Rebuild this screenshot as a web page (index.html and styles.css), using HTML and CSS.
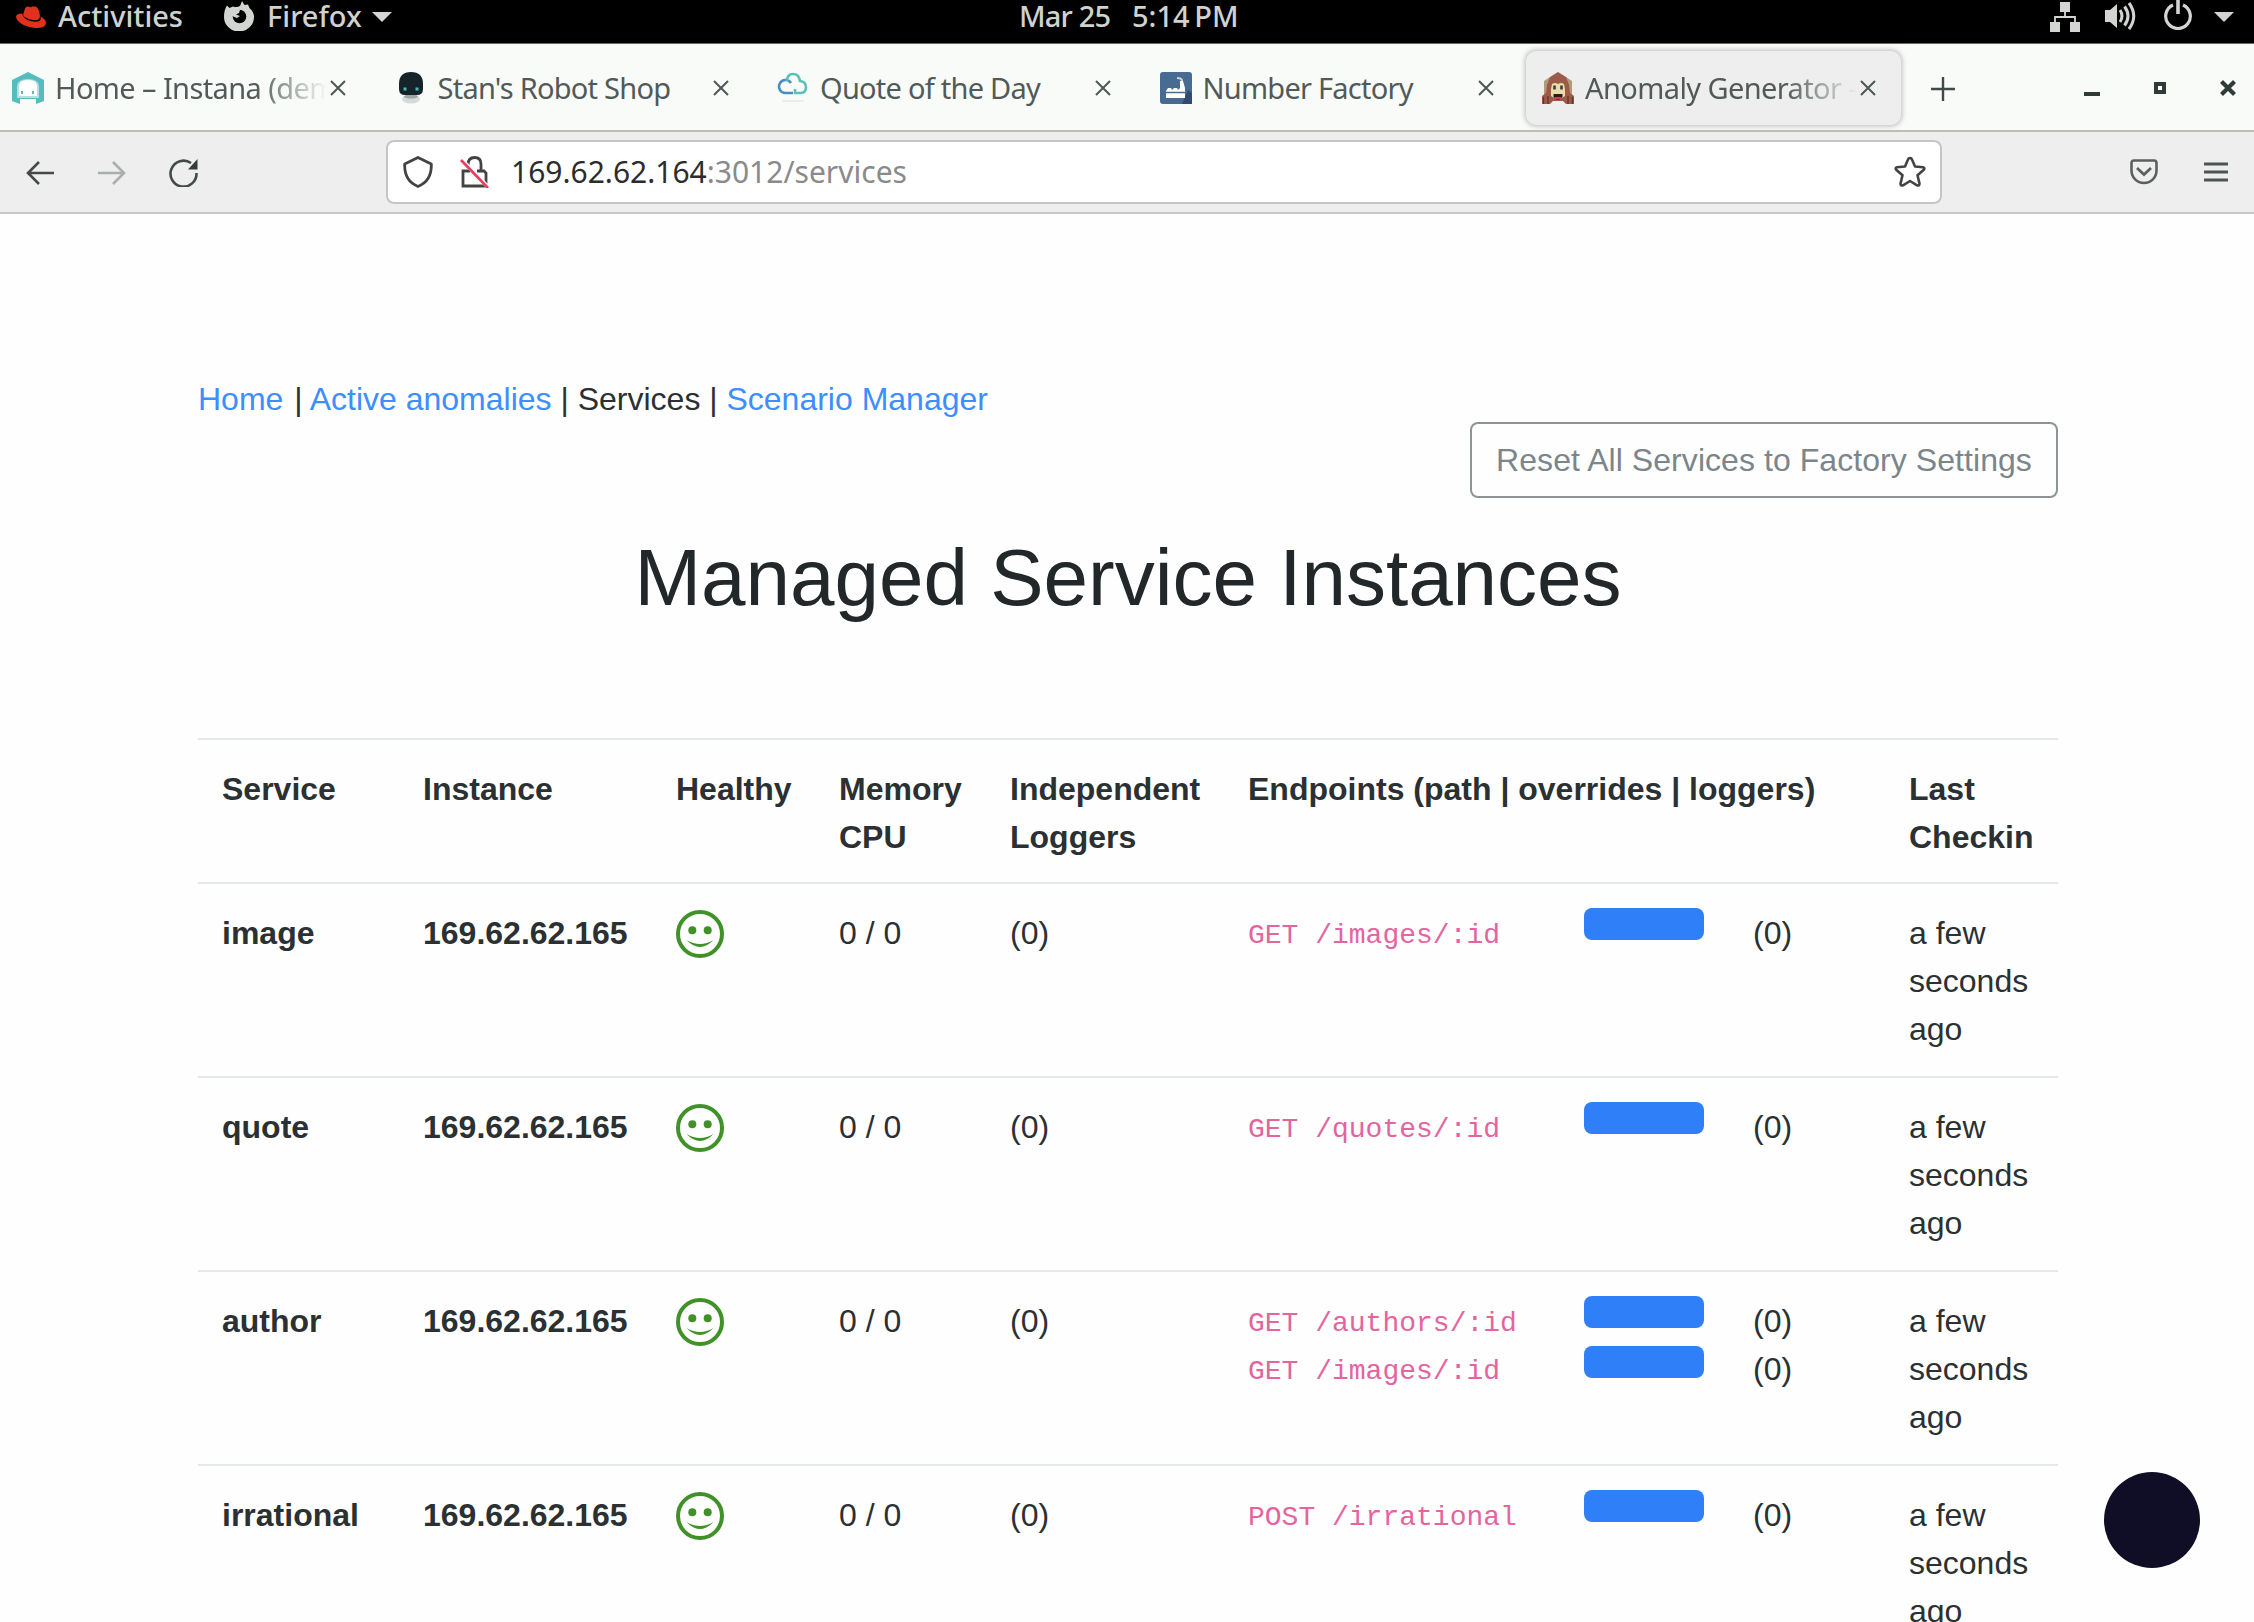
FILE: index.html
```html
<!DOCTYPE html>
<html lang="en">
<head>
<meta charset="utf-8">
<title>Anomaly Generator - Services</title>
<link rel="stylesheet" href="styles.css">
</head>
<body>
<svg class="defs" width="0" height="0">
  <symbol id="close" viewBox="0 0 16 16"><path d="M1 1l14 14M15 1L1 15" fill="none" stroke="currentColor" stroke-width="2"/></symbol>
  <symbol id="smile" viewBox="0 0 48 48"><circle cx="24" cy="24" r="22" fill="none" stroke="#3f9128" stroke-width="4"/><circle cx="16.3" cy="20.3" r="4" fill="#3f9128"/><circle cx="31.700" cy="20.300" r="4" fill="#3f9128"/><path d="M10.500 30q13.500 14 27 0q-13.500 8-27 0z" fill="#3f9128"/></symbol>
</svg>

<header class="topbar">
  <div class="topbar-left">
    <svg class="hat" viewBox="0 0 30 22"><path d="M7 9L9 2.500Q10 0 13 .8L15 1.300Q17-.5 20 .8Q23 2 24 10Q24 15 17 14Q9 12.500 7 9z" fill="#e0301e"/><path d="M6 7.500Q0 7.500 0 11C1 17 12 22.500 22 22Q30 21.500 30 16.500Q29.500 13 24.500 10.500Q26 16 19 15.800Q8 15 6 7.500z" fill="#e0301e"/></svg>
    <span class="sys activities">Activities</span>
    <svg class="fox" viewBox="0 0 30 30"><path d="M3 4.500L5.500 7 9 5.500 12 6.500 16 5 18 0 20.500 4 24 3.500 25.500 7Q30 11 30 16A15 14.500 0 0 1 0 16Q0 9 3 4.500z" fill="#d3d5d2"/><circle cx="15.500" cy="15.500" r="6.800" fill="#000"/><path d="M6 8l7-2 3 3-1 3-3 1.500 4 1.500-3 2-5-2z" fill="#d3d5d2"/></svg>
    <span class="sys firefox">Firefox</span>
    <svg class="tri" viewBox="0 0 20 10"><path d="M0 0h20L10 10z" fill="#d3d5d2"/></svg>
  </div>
  <div class="clock"><span class="sys date">Mar 25</span><span class="sys time">5:14 PM</span></div>
  <div class="topbar-right">
    <svg class="net" viewBox="0 0 30 30"><path d="M10 0h10v10H10zM0 20h10v10H0zM20 20h10v10H20z" fill="#d3d5d2"/><path d="M15 10v5M5 20v-5h20v5" fill="none" stroke="#d3d5d2" stroke-width="1.800"/></svg>
    <svg class="vol" viewBox="0 0 32 28"><path d="M0 8h5l7-6v24l-7-6H0z" fill="#d3d5d2"/><path d="M15 8q4 6 0 12M19.500 4.500q7 9.500 0 19M24 1q9.500 13 0 26" fill="none" stroke="#d3d5d2" stroke-width="3"/></svg>
    <svg class="power" viewBox="0 0 28 30"><path d="M9 5A12.300 12.300 0 1 0 19 5" fill="none" stroke="#d3d5d2" stroke-width="3.200"/><path d="M14 0v14" stroke="#d3d5d2" stroke-width="3.600"/></svg>
    <svg class="tri" viewBox="0 0 20 10"><path d="M0 0h20L10 10z" fill="#d3d5d2"/></svg>
  </div>
</header>

<div class="tabstrip">
  <div class="tab">
    <svg class="favicon" viewBox="0 0 32 32"><path d="M16 0L32 8v21l-8 3v-5H8v5L0 29V8z" fill="#56bdbe"/><path d="M5 14Q6 7 16 7t11 7v12H5z" fill="#b5e0e0"/><path d="M7 14Q7 8 16 8t9 6v10H7z" fill="#fff"/><path d="M10 19v3M21 19v3" stroke="#56bdbe" stroke-width="2"/></svg>
    <span class="tab-label fade">Home – Instana (dem</span>
    <svg class="tab-close"><use href="#close"/></svg>
  </div>
  <div class="tab">
    <svg class="favicon" viewBox="0 0 32 32"><ellipse cx="16" cy="27" rx="9" ry="4.500" fill="#d4dadb"/><ellipse cx="16" cy="24.500" rx="7" ry="2" fill="#9aa5a8"/><path d="M4 12Q4 0 16 0t12 12v5q0 6-6 6H10q-6 0-6-6z" fill="#15242b"/><path d="M10 15.500v3M22 15.500v3" stroke="#49b9b5" stroke-width="3"/></svg>
    <span class="tab-label">Stan's Robot Shop</span>
    <svg class="tab-close"><use href="#close"/></svg>
  </div>
  <div class="tab">
    <svg class="favicon" viewBox="0 0 32 32"><path d="M16 21H8.500A6.500 6.500 0 1 1 14 11" fill="none" stroke="#4a8cc0" stroke-width="2.600"/><path d="M10 9Q10 2 16 2t7 7q6 .5 6 6.500 0 5.500-6 5.500h-5V17" fill="none" stroke="#5bc1b6" stroke-width="2.600"/><path d="M5 29h22" stroke="#eceeee" stroke-width="2"/></svg>
    <span class="tab-label">Quote of the Day</span>
    <svg class="tab-close"><use href="#close"/></svg>
  </div>
  <div class="tab">
    <svg class="favicon" viewBox="0 0 32 32"><rect width="32" height="32" rx="3" fill="#486b92"/><path d="M22 32l6-14 4 3v11z" fill="#304d70"/><path d="M6 26v-7l2-3h3l1 2 2-2h3l1 2 2-2V9h3l2 7v10z" fill="#fff"/><path d="M22 9q0-3-5-3" fill="none" stroke="#c6d1dd" stroke-width="2"/><path d="M6 20.500h19" stroke="#486b92" stroke-width="1.500"/></svg>
    <span class="tab-label">Number Factory</span>
    <svg class="tab-close"><use href="#close"/></svg>
  </div>
  <div class="tab active">
    <svg class="favicon" viewBox="0 0 32 32"><path d="M2 9l6-4h16l6 4v14H2z" fill="#b09c78"/><path d="M8 5L16 0l8 5 3 8 1 8 4 3v8h-8l-3-3H11l-3 3H0v-8l4-3 1-8z" fill="#9c5a48"/><path d="M10 12q3-2 6 0 3-2 6 0l1 5v7q-7 6-14 0v-7z" fill="#e9dcab"/><path d="M1.500 32v-7M30.500 32v-7M6 32v-8M26 32v-8" stroke="#5d362b" stroke-width="1.200"/><path d="M12.500 13.500v4M19.500 13.500v4" stroke="#403c3c" stroke-width="2.600"/><path d="M11.500 22h9v3l-3 2.500h-3l-3-2.500z" fill="#2a1b21"/><path d="M13 26h6" stroke="#df3654" stroke-width="2"/></svg>
    <span class="tab-label fade">Anomaly Generator -</span>
    <svg class="tab-close"><use href="#close"/></svg>
  </div>
  <svg class="plus" viewBox="0 0 24 24"><path d="M12 0v24M0 12h24" stroke="#3f4a49" stroke-width="2.400"/></svg>
  <svg class="minimize" viewBox="0 0 16 16"><path d="M0 14h16" stroke="#2e3b38" stroke-width="4"/></svg>
  <svg class="maximize" viewBox="0 0 12 12"><rect x="2" y="2" width="8" height="8" fill="#fff" stroke="#2e3b38" stroke-width="4"/></svg>
  <svg class="quit" viewBox="0 0 16 16"><path d="M1.500 1.500l13 13M14.500 1.500l-13 13" stroke="#2e3b38" stroke-width="4.200"/></svg>
</div>

<div class="toolbar">
  <svg class="back" viewBox="0 0 28 24"><path d="M28 12H2M13 1L2 12l11 11" fill="none" stroke="#434b4a" stroke-width="2.600"/></svg>
  <svg class="forward" viewBox="0 0 28 24"><path d="M0 12h26M15 1l11 11-11 11" fill="none" stroke="#a9afae" stroke-width="2.600"/></svg>
  <svg class="reload" viewBox="0 0 30 28"><path d="M27.500 14A13 13 0 1 1 22 4" fill="none" stroke="#434b4a" stroke-width="2.600"/><path d="M28.500 0v10.500H19z" fill="#333e3c"/></svg>
  <div class="urlbar">
    <svg class="shield" viewBox="0 0 30 32"><path d="M15 1.500L28.300 8Q29 25 15 30.500Q1 25 1.700 8z" fill="none" stroke="#434343" stroke-width="2.800" stroke-linejoin="round"/></svg>
    <svg class="lock" viewBox="0 0 30 32"><path d="M8 9q0-7.500 6.500-7.500T21 8v6M10 15H3v15h23V17l-2-2h-7" fill="none" stroke="#434343" stroke-width="2.800"/><path d="M2 4l27 28" stroke="#fff" stroke-width="4"/><path d="M1 4l27 28" stroke="#eb3b5e" stroke-width="2.600"/></svg>
    <span class="url">169.62.62.164<span class="url-rest">:3012/services</span></span>
    <svg class="star" viewBox="0 0 32 32"><path d="M16 2q1.500 0 2 1.500l3 7 8 .8q2.500.6.500 2.700l-6 5.300 2 8.300q0 2.700-2.500 1.700l-7-4.300-7 4.300q-2.500 1-2.500-1.700l2-8.300-6-5.300q-2-2.100.5-2.700l8-.8 3-7Q14.500 2 16 2z" fill="none" stroke="#434343" stroke-width="2.600" stroke-linejoin="round"/></svg>
  </div>
  <svg class="pocket" viewBox="0 0 28 26"><path d="M4 1.500h20q2.500 0 2.500 2.500v7.500a12.500 12.500 0 0 1-25 0V4q0-2.500 2.500-2.500z" fill="none" stroke="#59605f" stroke-width="2.600"/><path d="M7 9l7 6.500L21 9" fill="none" stroke="#59605f" stroke-width="2.800"/></svg>
  <svg class="menu" viewBox="0 0 24 20"><path d="M0 2h24M0 10h24M0 18h24" stroke="#4c5453" stroke-width="2.800"/></svg>
</div>

<main class="container">
  <nav class="crumbs"><a class="home">Home</a> | <a>Active anomalies</a> | Services | <a>Scenario Manager</a></nav>
  <button class="reset">Reset All Services to Factory Settings</button>
  <h1>Managed Service Instances</h1>

  <div class="table">
    <div class="row head">
      <div>Service</div><div>Instance</div><div>Healthy</div><div>Memory CPU</div><div>Independent Loggers</div><div>Endpoints (path | overrides | loggers)</div><div>Last Checkin</div>
    </div>
    <div class="row">
      <div class="strong">image</div><div class="strong">169.62.62.165</div><div><svg class="smile"><use href="#smile"/></svg></div><div>0 / 0</div><div>(0)</div>
      <div class="endpoints"><div class="paths"><code>GET /images/:id</code></div><div class="bars"><i></i></div><div>(0)</div></div>
      <div>a few seconds ago</div>
    </div>
    <div class="row">
      <div class="strong">quote</div><div class="strong">169.62.62.165</div><div><svg class="smile"><use href="#smile"/></svg></div><div>0 / 0</div><div>(0)</div>
      <div class="endpoints"><div class="paths"><code>GET /quotes/:id</code></div><div class="bars"><i></i></div><div>(0)</div></div>
      <div>a few seconds ago</div>
    </div>
    <div class="row">
      <div class="strong">author</div><div class="strong">169.62.62.165</div><div><svg class="smile"><use href="#smile"/></svg></div><div>0 / 0</div><div>(0)</div>
      <div class="endpoints"><div class="paths"><code>GET /authors/:id</code><code>GET /images/:id</code></div><div class="bars"><i></i><i></i></div><div>(0)<br>(0)</div></div>
      <div>a few seconds ago</div>
    </div>
    <div class="row">
      <div class="strong">irrational</div><div class="strong">169.62.62.165</div><div><svg class="smile"><use href="#smile"/></svg></div><div>0 / 0</div><div>(0)</div>
      <div class="endpoints"><div class="paths"><code>POST /irrational</code></div><div class="bars"><i></i></div><div>(0)</div></div>
      <div>a few seconds ago</div>
    </div>
  </div>
</main>
<div class="fab"></div>
</body>
</html>
```
FILE: styles.css
```css
* { box-sizing: border-box; }
html, body { height: 1622px; overflow: hidden; }
body {
  margin: 0;
  background: #fefefe;
  color: #2b3033;
  font: 32px/48px "Liberation Sans", Arial, sans-serif;
}
svg { display: block; flex: none; }
.defs { position: absolute; }

/* Desktop top bar */
.topbar {
  height: 44px;
  background: #000;
  border-bottom: 1px solid #666;
  display: grid;
  grid-template-columns: 1019px 1fr 204px;
  align-items: start;
}
.topbar > div { display: flex; align-items: flex-start; }
.sys {
  font: 500 29px/31px "Noto Sans", sans-serif;
  color: #d0d2cf;
  white-space: nowrap;
}
.hat { width: 30px; height: 22px; margin: 6px 0 0 16px; }
.activities { width: 166px; margin-left: 12px; }
.fox { width: 30px; height: 30px; margin: 1px 13px 0 0; }
.firefox { width: 105px; }
.tri { width: 20px; height: 10px; margin-top: 12px; }
.date { width: 113px; letter-spacing: -.8px; }
.time { word-spacing: -3px; }
.net { width: 30px; height: 30px; margin: 2px 25px 0 0; }
.vol { width: 32px; height: 28px; margin: 2px 27px 0 0; }
.power { width: 28px; height: 30px; margin-right: 22px; }

/* Browser tabs */
.tabstrip {
  height: 88px;
  padding: 7px 0 5px;
  background: #f9fbf8;
  border-bottom: 2px solid #bcbdbb;
  display: flex;
  align-items: flex-start;
}
.tab {
  width: 375px;
  height: 74px;
  margin-right: 7.500px;
  padding: 0 25px 0 16px;
  display: flex;
  align-items: center;
  flex: none;
  border-radius: 10px;
}
.tab:first-child { margin-left: -4px; }
.tab.active { background: #eee; box-shadow: 0 0 5px 1px #b9bbb9; }
.favicon { width: 32px; height: 32px; margin-right: 11px; }
.tab-label {
  width: 275px;
  overflow: hidden;
  white-space: nowrap;
  font: 29px/40px "Noto Sans", sans-serif;
  letter-spacing: -.75px;
  color: #515a59;
}
.tab-label.fade {
  letter-spacing: -.6px;
  -webkit-mask-image: linear-gradient(90deg, #000 73%, transparent 99%);
  mask-image: linear-gradient(90deg, #000 73%, transparent 99%);
}
.tab-close { width: 16px; height: 16px; color: #4d5756; }
.plus { width: 24px; height: 24px; margin: 26px 0 0 22.500px; }
.minimize { width: 16px; height: 16px; margin: 29px 54px 0 129px; }
.maximize { width: 12px; height: 12px; margin: 31px 54px 0 0; }
.quit { width: 16px; height: 16px; margin-top: 29px; }

/* Navigation toolbar */
.toolbar {
  height: 82px;
  background: #eee;
  border-bottom: 2px solid #c8c8c8;
  display: flex;
  align-items: center;
}
.back { width: 28px; height: 24px; margin: 1px 44px 0 26px; }
.forward { width: 28px; height: 24px; margin: 1px 43px 0 0; }
.reload { width: 30px; height: 28px; margin: 2px 187px 0 0; }
.urlbar {
  width: 1556px;
  height: 64px;
  padding: 0 14px 0 15px;
  border: 2px solid #c5c5c3;
  border-radius: 8px;
  background: #fff;
  display: flex;
  align-items: center;
}
.shield { width: 30px; height: 32px; margin-right: 27px; }
.lock { width: 30px; height: 32px; margin-right: 21px; }
.url { flex: 1; font: 30px/40px "Noto Sans", sans-serif; color: #2c2c2c; }
.url-rest { color: #8a8a8a; }
.star { width: 32px; height: 32px; }
.pocket { width: 28px; height: 26px; margin: 0 46px 0 188px; }
.menu { width: 24px; height: 20px; }

/* Page */
.container {
  width: 1860px;
  margin: 161px 0 0 198px;
  display: flex;
  flex-direction: column;
}
.crumbs { height: 47px; }
.crumbs a { color: #3d8eff; }
.crumbs .home { margin-right: 2px; }
.reset {
  align-self: flex-end;
  width: 588px;
  height: 76px;
  padding: 0;
  border: 2px solid #8c9496;
  border-radius: 8px;
  background: transparent;
  font: inherit;
  letter-spacing: .06px;
  color: #7b858a;
}
h1 {
  margin: 32px 0 112px;
  font-size: 80px;
  line-height: 96px;
  font-weight: 400;
  text-align: center;
  color: #22272a;
}
.row {
  height: 194px;
  padding-top: 25px;
  border-top: 2px solid #e5eae9;
  display: grid;
  grid-template-columns: 201px 253px 163px 171px 238px 661px 173px;
}
.row > div { padding-left: 24px; }
.row.head { height: 144px; font-weight: 700; }
.strong { font-weight: 700; }
.smile { width: 48px; height: 48px; margin-top: 1px; }
.endpoints {
  display: grid;
  grid-template-columns: 336px 169px 1fr;
  align-items: start;
}
.paths { padding-top: 3px; }
code {
  display: block;
  font: 28px/48px "Liberation Mono", "Courier New", monospace;
  color: #e4649f;
}
.bars { display: grid; gap: 18px; margin-top: -1px; }
.bars i { width: 120px; height: 32px; border-radius: 8px; background: #2f7ff8; }
.fab {
  position: absolute;
  left: 2104px;
  top: 1472px;
  width: 96px;
  height: 96px;
  border-radius: 50%;
  background: #100d26;
}
```
